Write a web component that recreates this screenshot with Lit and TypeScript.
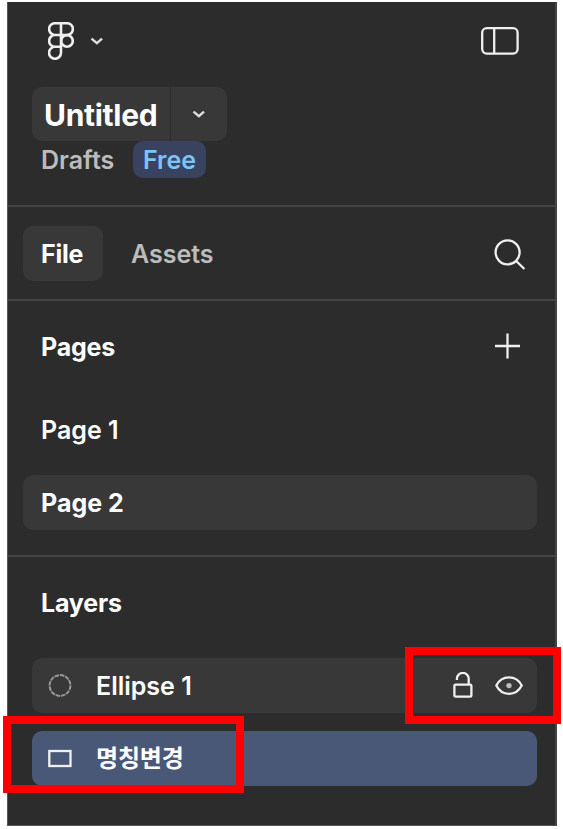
import { LitElement, html, svg, css } from "lit";
import { customElement, state } from "lit/decorators.js";
import { classMap } from "lit/directives/class-map.js";

const chevron = html`<svg class="chev" width="14" height="10" viewBox="0 0 14 10"><path d="M1.5 2.6 L6.9 7.2 L12 2.6" /></svg>`;

const logo = html`<svg class="logo" width="26" height="38" viewBox="0 0 26 38">
  <path d="M13 1.2 H7 a5.8 5.8 0 0 0 0 11.8 H13 Z M13 1.2 H19 a5.8 5.8 0 0 1 0 11.8 H13 M13 13 H7 a5.8 5.8 0 0 0 0 11.8 H13 Z M13 24.8 H7 a6 6 0 1 0 6 6 Z" />
  <circle cx="19" cy="18.9" r="5.8" />
</svg>`;

const sidebarIcon = html`<svg width="38" height="28" viewBox="0 0 38 28">
  <rect x="1.2" y="1.2" width="35.4" height="25.4" rx="4.5" /><path d="M13.2 1.2 V26.6" />
</svg>`;

const searchIcon = html`<svg class="search" width="32" height="32" viewBox="0 0 32 32">
  <circle cx="13.6" cy="13.4" r="12" /><path d="M22.2 22 L30.4 30" />
</svg>`;

const plusIcon = html`<svg class="plus" width="26" height="26" viewBox="0 0 26 26"><path d="M13.5 0.5 V25.5 M1 13 H26" /></svg>`;

const shapes = {
  ellipse: svg`<circle class="dashed" cx="12" cy="11.5" r="10.4" />`,
  rect: svg`<rect x="1.3" y="4" width="21.2" height="15" />`,
};

const lockIcon = html`<svg width="20" height="27" viewBox="0 0 20 27">
  <rect x="1.4" y="12.6" width="17" height="12" rx="1.2" />
  <path d="M3.9 8 V6.6 a5.8 5.6 0 0 1 11.8 0 V12.4" />
</svg>`;

const eyeIcon = html`<svg width="28" height="20" viewBox="0 0 28 20">
  <path d="M1.3 9.5 C4 4.2 8.7 1.4 14 1.4 S24 4.2 26.7 9.5 C24 14.8 19.3 17.8 14 17.8 S4 14.8 1.3 9.5 Z" />
  <circle class="dot" cx="14" cy="9.6" r="2.7" />
</svg>`;

type Layer = { name: string; shape: "ellipse" | "rect"; tools?: boolean };

@customElement("app-root")
export class AppRoot extends LitElement {
  @state() private page = "Page 2";
  @state() private layer = "명칭변경";

  private layers: Layer[] = [
    { name: "Ellipse 1", shape: "ellipse", tools: true },
    { name: "명칭변경", shape: "rect" },
  ];

  static styles = css`
    :host {
      display: block;
      position: relative;
      box-sizing: border-box;
      width: 563px;
      height: 829px;
      padding: 2px 6px 3px 7px;
      overflow: hidden;
      background: #fff;
      color: #fff;
      font: 600 25px/54px Inter, "Noto Sans CJK KR", sans-serif;
      white-space: nowrap;
    }
    * { box-sizing: border-box; }
    svg { display: block; flex: none; fill: none; stroke: #efefef; stroke-width: 2.3; }
    .panel {
      height: 824px;
      background: #2c2c2c;
      border: solid #555;
      border-width: 0 2px 1px 1px;
      border-right-color: #444;
    }
    section { border-bottom: 2px solid #444; }
    .head { height: 205px; padding: 20px 36px 0 24px; }
    .bar { display: flex; align-items: center; }
    .logo { margin: 0 16px; stroke-width: 2.6; }
    .chev { stroke: #ddd; stroke-width: 2.5; }
    .grow { flex: 1; }
    .title { display: flex; gap: 1px; height: 54px; margin-top: 27px; }
    .name, .more { background: #383838; }
    .name {
      width: 138px;
      padding-left: 12px;
      border-radius: 10px 0 0 10px;
      font-size: 30px;
      font-weight: 700;
      line-height: 56px;
      letter-spacing: -0.3px;
    }
    .more { width: 56px; display: grid; place-items: center; border-radius: 0 10px 10px 0; }
    .place { display: flex; height: 37px; line-height: 38px; padding-left: 9px; color: #bcbcbc; }
    .drafts { width: 92px; }
    .badge { width: 73px; text-align: center; border-radius: 10px; background: #394360; color: #7cc4f8; }
    .tabs { display: flex; align-items: center; height: 94px; padding: 0 29px 0 15px; }
    .tab { height: 55px; line-height: 56px; padding-left: 18px; border-radius: 10px; color: #bcbcbc; }
    .tab.on { width: 80px; background: #383838; color: #fff; font-weight: 700; letter-spacing: -0.2px; }
    .tab + .tab { margin-left: 10px; }
    .search { margin-top: 4px; }
    .plus { margin-bottom: 2px; }
    .pages { height: 256px; padding: 19px 18px 0 15px; }
    .heading { display: flex; align-items: center; height: 54px; padding: 0 17px 0 18px; font-weight: 700; letter-spacing: -0.2px; }
    .row { height: 55px; line-height: 56px; padding-left: 18px; border-radius: 10px; }
    .row.on { background: #383838; font-weight: 700; }
    .heading + .row { margin-top: 28px; }
    .row + .row { margin-top: 18px; }
    .layers { padding: 19px 18px 0 15px; }
    .layer {
      display: flex;
      align-items: center;
      height: 55px;
      margin: 0 0 18px 9px;
      padding: 0 14px 0 16px;
      border-radius: 10px;
      background: #383838;
    }
    .heading + .layer { margin-top: 28px; }
    .layer.on { background: #4a5878; }
    .label { flex: 1; margin-left: 24px; }
    .layer.on .label { font-size: 24px; font-weight: 700; line-height: 52px; letter-spacing: -0.2px; }
    .layer svg + svg { margin-left: 22px; }
    .dashed { stroke: #999; stroke-width: 2; stroke-dasharray: 4.5 0.9; }
    .dot { fill: #bbb; stroke: none; }
    .mark { position: absolute; border: 8px solid #f00; }
    .tools { left: 405px; top: 647px; width: 156px; height: 77px; }
    .rename { left: 3px; top: 716px; width: 241px; height: 77px; }
  `;

  render() {
    return html`
      <div class="panel">
        <section class="head">
          <div class="bar">${logo}${chevron}<span class="grow"></span>${sidebarIcon}</div>
          <div class="title"><div class="name">Untitled</div><div class="more">${chevron}</div></div>
          <div class="place"><span class="drafts">Drafts</span><span class="badge">Free</span></div>
        </section>
        <section class="tabs">
          <div class="tab on">File</div><div class="tab">Assets</div>
          <span class="grow"></span>${searchIcon}
        </section>
        <section class="pages">
          <div class="heading"><span class="grow">Pages</span>${plusIcon}</div>
          ${["Page 1", "Page 2"].map((p) => html`
            <div class=${classMap({ row: true, on: p === this.page })} @click=${() => (this.page = p)}>${p}</div>`)}
        </section>
        <div class="layers">
          <div class="heading">Layers</div>
          ${this.layers.map((l) => html`
            <div class=${classMap({ layer: true, on: l.name === this.layer })} @click=${() => (this.layer = l.name)}>
              <svg width="24" height="24" viewBox="0 0 24 24">${shapes[l.shape]}</svg>
              <span class="label">${l.name}</span>
              ${l.tools ? html`${lockIcon}${eyeIcon}` : ""}
            </div>`)}
        </div>
      </div>
      <div class="mark tools"></div>
      <div class="mark rename"></div>
    `;
  }
}
